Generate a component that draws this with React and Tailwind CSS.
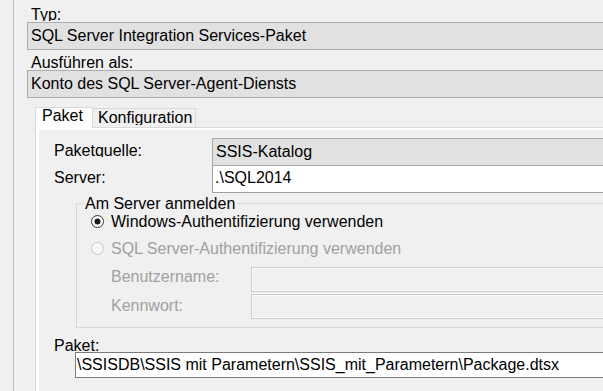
import React from "react";

function Radio({ checked, disabled }) {
  return (
    <svg width="13" height="13" viewBox="0 0 13 13" className="mt-[2px] shrink-0">
      <circle
        cx="6.5"
        cy="6.5"
        r="6"
        fill={disabled ? "#f7f7f7" : "#ffffff"}
        stroke={disabled ? "#c6c6c6" : "#333333"}
        strokeWidth="1"
      />
      {checked && <circle cx="6.5" cy="6.5" r="3" fill="#1a1a1a" />}
    </svg>
  );
}

export default function App() {
  return (
    <div className="w-[603px] h-[391px] overflow-hidden bg-[#f0f0f0] font-['Liberation_Sans',Arial,sans-serif] text-[16px] text-black">
      <div className="ml-[13px] w-[720px] h-full border-l border-[#bcbcbc]">
        <div className="ml-[13px]">
          <div className="h-[22px] pt-[6px] pl-[4px]">
            <div className="h-[15px] overflow-hidden leading-[18px]">Typ:</div>
          </div>
          <div className="h-[28px] border-y border-l border-[#adadad] bg-[#e1e1e1] pl-[3px] leading-[26px] whitespace-nowrap">
            SQL Server Integration Services-Paket
          </div>
          <div className="h-[20px] pt-[4px] pl-[4px]">
            <div className="h-[15px] overflow-hidden leading-[18px]">Ausführen als:</div>
          </div>
          <div className="h-[28px] border-y border-l border-[#adadad] bg-[#e1e1e1] pl-[3px] leading-[26px] whitespace-nowrap">
            Konto des SQL Server-Agent-Diensts
          </div>
        </div>

        <div className="ml-[21px] mt-[9px] flex h-[20px] items-end">
          <div className="relative z-10 mb-[-1px] h-[21px] w-[58px] border-x border-t border-[#d9d9d9] bg-white pl-[6px] leading-[16px] overflow-hidden">
            Paket
          </div>
          <div className="h-[19px] w-[103px] border-r border-t border-[#d9d9d9] bg-[#f0f0f0] pl-[5px] pt-[1px] whitespace-nowrap">
            <div className="h-[15px] overflow-hidden leading-[16px]">Konfiguration</div>
          </div>
        </div>

        <div className="ml-[21px] h-[400px] border-l border-t border-[#d9d9d9] bg-white pl-[3px] pt-[2px]">
          <div className="h-full bg-[#f0f0f0] pt-[8px]">
            <div className="flex">
              <div className="w-[173px] shrink-0 pl-[15px] pt-[4px]">
                <div className="h-[15px] overflow-hidden leading-[18px]">Paketquelle:</div>
              </div>
              <div className="h-[28px] flex-1 border-y border-l border-[#a8a8a8] bg-[#e1e1e1] pl-[3px] leading-[26px]">
                SSIS-Katalog
              </div>
            </div>
            <div className="flex">
              <div className="w-[173px] shrink-0 pl-[15px] leading-[24px]">Server:</div>
              <div className="h-[27px] flex-1 border-b border-l border-[#a0a0a0] bg-white pl-[2px] leading-[24px]">
                {".\\SQL2014"}
              </div>
            </div>

            <div className="ml-[37px] mt-[10px] border border-[#d7d7d7] pb-[8px]">
              <div className="mt-[-8px] ml-[6px] w-fit bg-[#f0f0f0] px-[2px] leading-[16px]">Am Server anmelden</div>
              <div className="ml-[14px] mt-[1px] flex h-[18px] items-start">
                <Radio checked />
                <div className="ml-[7px] leading-[18px] whitespace-nowrap">Windows-Authentifizierung verwenden</div>
              </div>
              <div className="ml-[14px] mt-[9px] flex h-[18px] items-start">
                <Radio disabled />
                <div className="ml-[7px] leading-[18px] whitespace-nowrap text-[#a0a0a0]">
                  SQL Server-Authentifizierung verwenden
                </div>
              </div>
              <div className="mt-[9px] flex">
                <div className="w-[174px] shrink-0 pl-[34px] pt-[1px] leading-[18px] text-[#a0a0a0]">Benutzername:</div>
                <div className="h-[25px] flex-1 border border-[#cccccc] shadow-[inset_0_0_0_1px_#f9f9f9]"></div>
              </div>
              <div className="mt-[2px] flex">
                <div className="w-[174px] shrink-0 pl-[34px] pt-[3px] leading-[18px] text-[#a0a0a0]">Kennwort:</div>
                <div className="h-[25px] flex-1 border border-[#cccccc] shadow-[inset_0_0_0_1px_#f9f9f9]"></div>
              </div>
            </div>

            <div className="mt-[9px] h-[15px] pl-[15px] leading-[18px]">Paket:</div>
            <div className="ml-[36px] h-[26px] border-y border-l border-[#7a7a7a] bg-white pl-[1px] leading-[24px] whitespace-nowrap">
              {"\\SSISDB\\SSIS mit Parametern\\SSIS_mit_Parametern\\Package.dtsx"}
            </div>
          </div>
        </div>
      </div>
    </div>
  );
}
